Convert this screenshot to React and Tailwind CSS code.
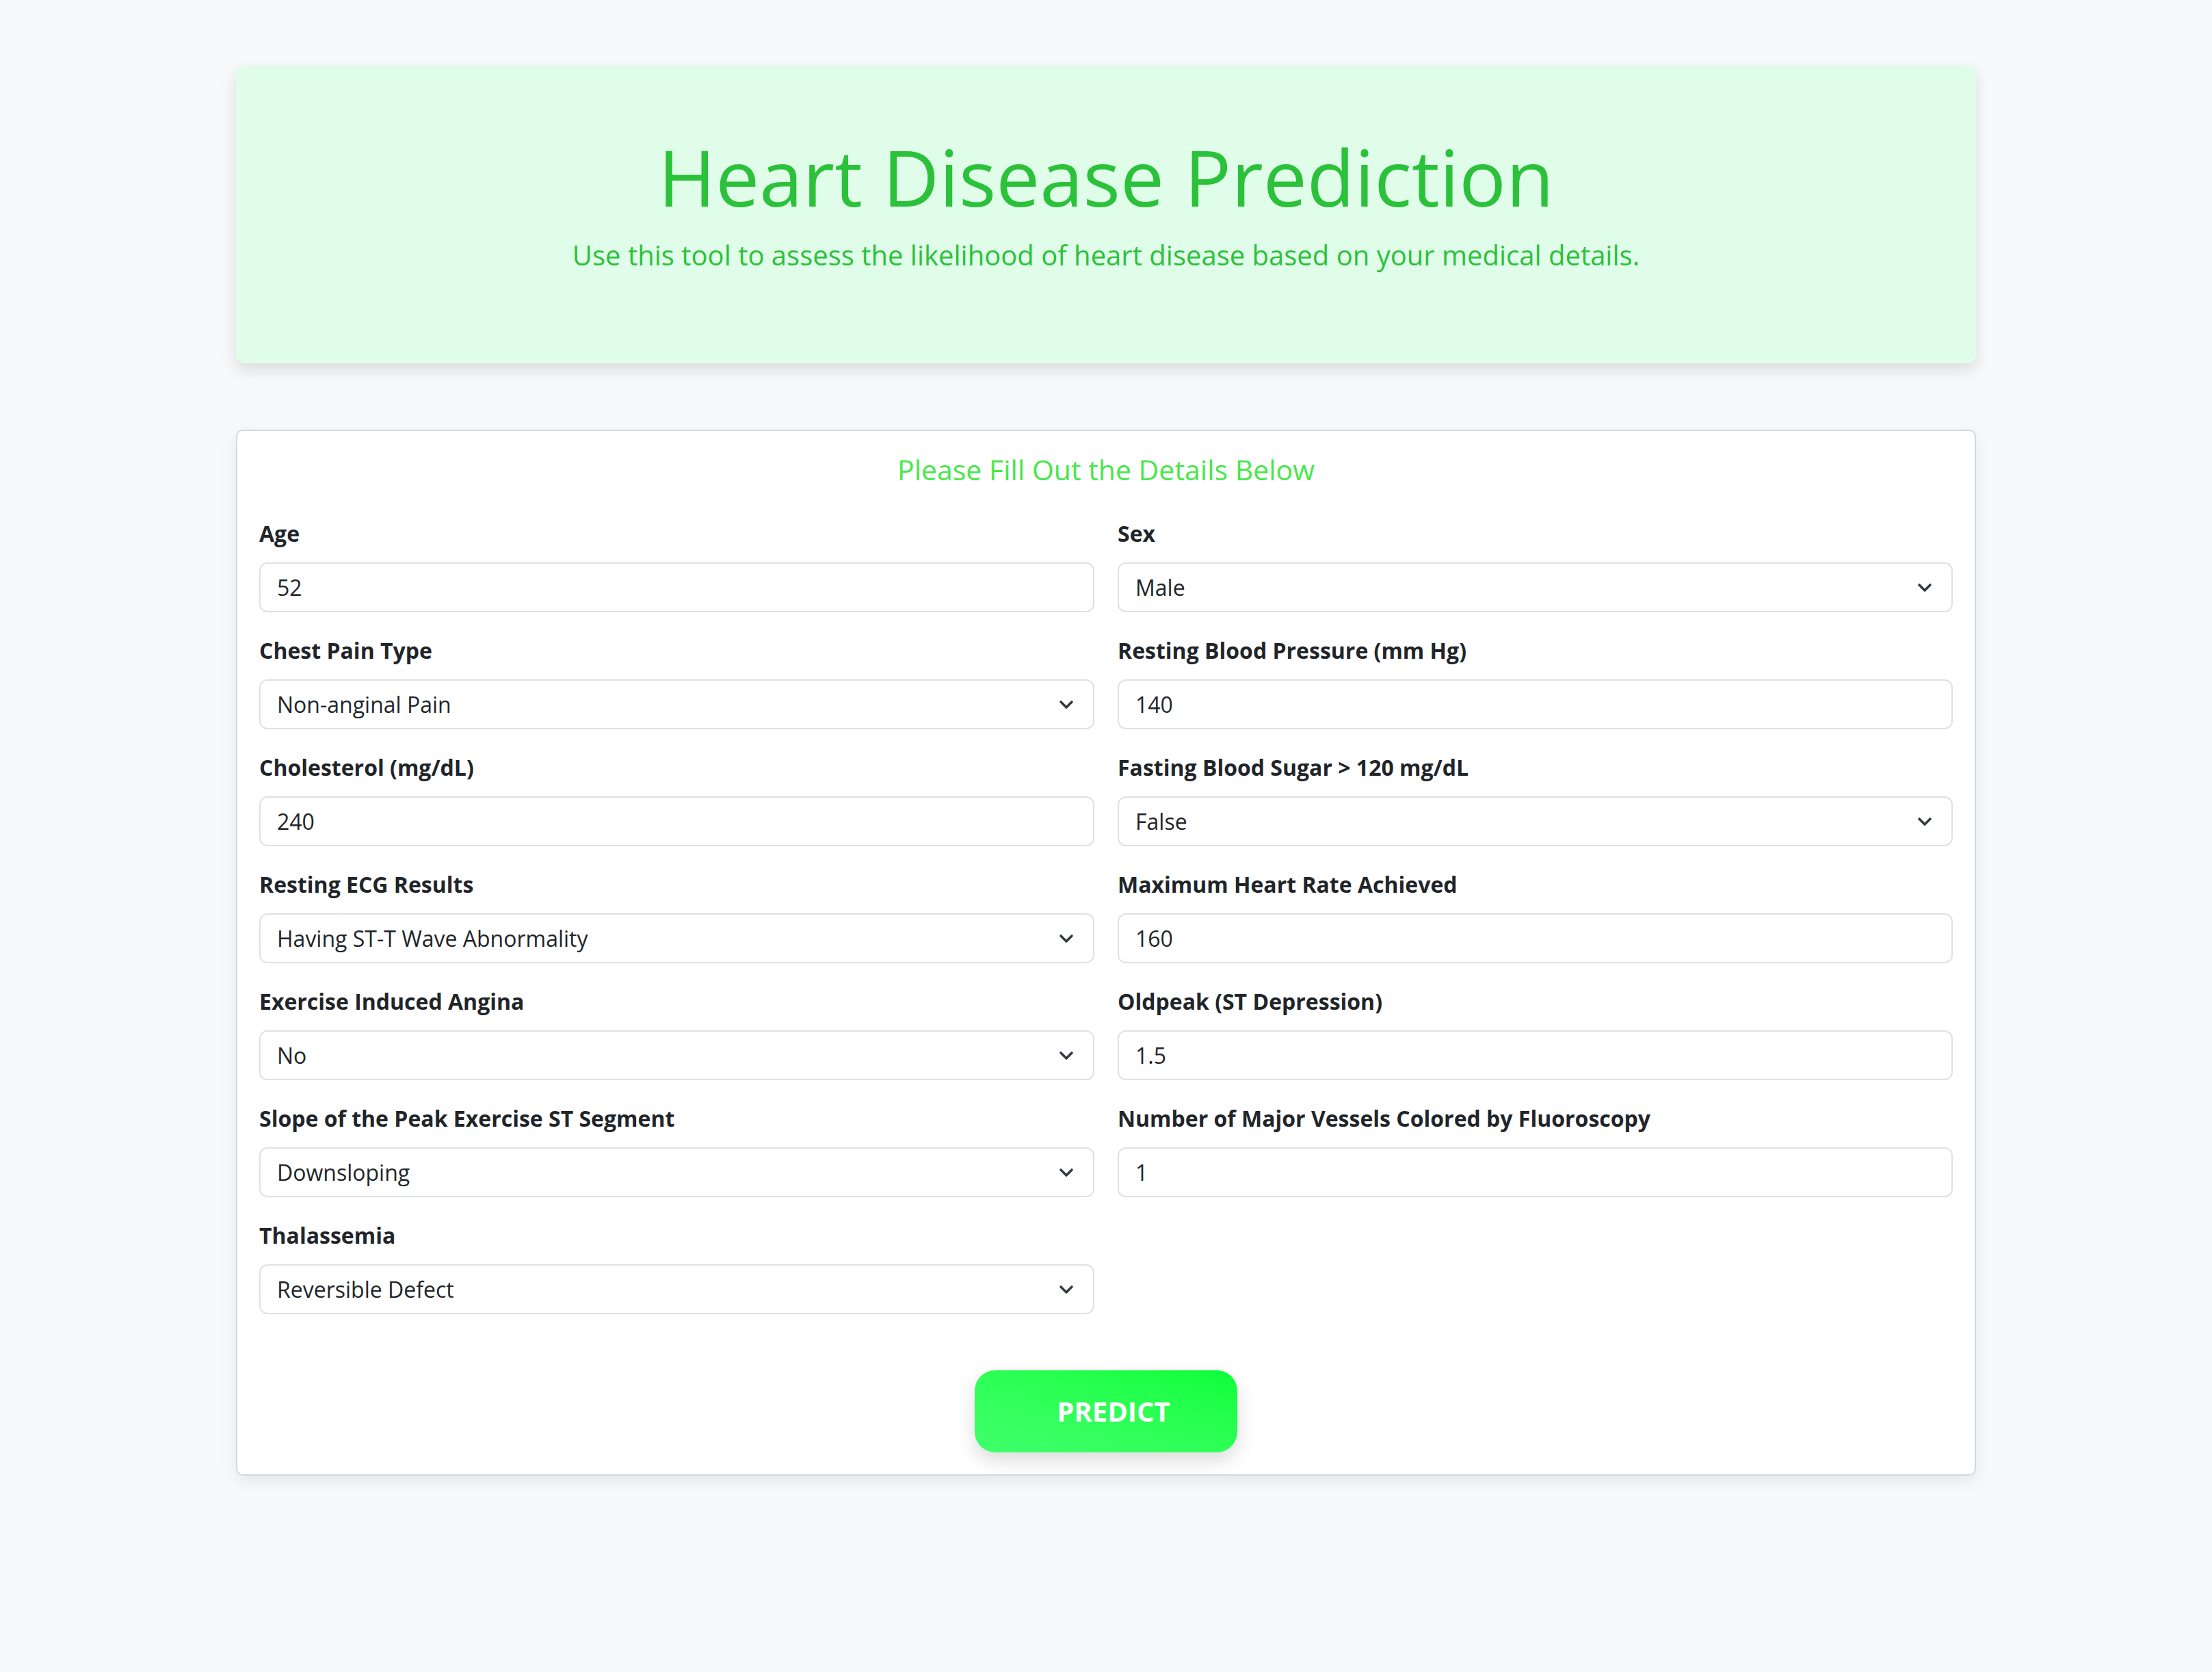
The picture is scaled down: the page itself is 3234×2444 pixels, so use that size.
import { useState } from 'react';

const fields = [
  { label: 'Age', type: 'input', value: '52' },
  { label: 'Sex', type: 'select', value: 'Male', options: ['Male', 'Female'] },
  { label: 'Chest Pain Type', type: 'select', value: 'Non-anginal Pain', options: ['Typical Angina', 'Atypical Angina', 'Non-anginal Pain', 'Asymptomatic'] },
  { label: 'Resting Blood Pressure (mm Hg)', type: 'input', value: '140' },
  { label: 'Cholesterol (mg/dL)', type: 'input', value: '240' },
  { label: 'Fasting Blood Sugar > 120 mg/dL', type: 'select', value: 'False', options: ['False', 'True'] },
  { label: 'Resting ECG Results', type: 'select', value: 'Having ST-T Wave Abnormality', options: ['Normal', 'Having ST-T Wave Abnormality', 'Left Ventricular Hypertrophy'] },
  { label: 'Maximum Heart Rate Achieved', type: 'input', value: '160' },
  { label: 'Exercise Induced Angina', type: 'select', value: 'No', options: ['No', 'Yes'] },
  { label: 'Oldpeak (ST Depression)', type: 'input', value: '1.5' },
  { label: 'Slope of the Peak Exercise ST Segment', type: 'select', value: 'Downsloping', options: ['Upsloping', 'Flat', 'Downsloping'] },
  { label: 'Number of Major Vessels Colored by Fluoroscopy', type: 'input', value: '1' },
  { label: 'Thalassemia', type: 'select', value: 'Reversible Defect', options: ['Normal', 'Fixed Defect', 'Reversible Defect'] },
];

function Field({ field, value, onChange }) {
  const box =
    'w-full h-[73px] rounded-[12px] border-2 border-[#dee2e6] bg-white pl-[24px] pr-[24px] text-[32px] text-[#212529] outline-none';
  return (
    <div className="flex flex-col">
      <label className="mb-[18px] text-[32px] leading-[48px] font-bold text-[#212529]">{field.label}</label>
      {field.type === 'input' ? (
        <input className={box} value={value} onChange={e => onChange(e.target.value)} />
      ) : (
        <div className="relative">
          <select className={box + ' appearance-none'} value={value} onChange={e => onChange(e.target.value)}>
            {field.options.map(o => (
              <option key={o}>{o}</option>
            ))}
          </select>
          <svg
            className="pointer-events-none absolute right-[30px] top-1/2 -translate-y-1/2"
            width="22"
            height="14"
            viewBox="0 0 22 14"
            fill="none"
            stroke="#343a40"
            strokeWidth="3.6"
            strokeLinecap="round"
            strokeLinejoin="round"
          >
            <path d="M3 3l8 8 8-8" />
          </svg>
        </div>
      )}
    </div>
  );
}

export default function App() {
  const [values, setValues] = useState(() => Object.fromEntries(fields.map(f => [f.label, f.value])));

  return (
    <div className="min-h-screen bg-[#f8f9fa] pt-[96px] pb-[96px]" style={{ fontFamily: '"Open Sans", "Noto Sans", sans-serif' }}>
      <div className="mx-auto w-[2544px]">
        <div className="h-[435px] rounded-[12px] bg-[#e0fdea] pt-[95px] text-center shadow-[0_10px_24px_rgba(0,0,0,0.12)]">
          <h1 className="text-[114px] leading-[134px] font-normal text-[#2cc13a]">Heart Disease Prediction</h1>
          <p className="mt-[18px] text-[40px] leading-[60px] text-[#2cc13a]">
            Use this tool to assess the likelihood of heart disease based on your medical details.
          </p>
        </div>

        <div className="mt-[97px] rounded-[10px] border-2 border-[#d6d8db] bg-white p-[32px] shadow-[0_8px_24px_rgba(0,0,0,0.08)]">
          <h2 className="mb-[46px] text-center text-[41px] leading-[48px] text-[#47e84a]">Please Fill Out the Details Below</h2>
          <div className="grid grid-cols-2 gap-x-[34px] gap-y-[32px]">
            {fields.map(f => (
              <Field
                key={f.label}
                field={f}
                value={values[f.label]}
                onChange={v => setValues(prev => ({ ...prev, [f.label]: v }))}
              />
            ))}
          </div>
          <div className="mt-[82px] flex justify-center">
            <button className="h-[120px] w-[384px] rounded-[30px] bg-gradient-to-tr from-[#40ff6c] to-[#08ff38] pl-[22px] text-[40px] font-bold text-white shadow-[0_12px_28px_rgba(0,0,0,0.14)]">
              PREDICT
            </button>
          </div>
        </div>
      </div>
    </div>
  );
}
